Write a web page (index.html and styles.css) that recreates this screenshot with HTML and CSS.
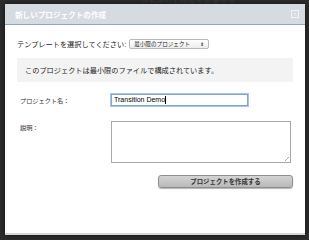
FILE: index.html
```html
<!DOCTYPE html>
<html lang="ja">
<head>
    <meta charset="UTF-8">
    <title>新しいプロジェクトの作成</title>
    <link rel="stylesheet" href="styles.css">
</head>
<body>
    <div class="backdrop-text">アカウント情報を編集する</div>
    <div class="dialog">
        <div class="dialog-header">
            <h1>新しいプロジェクトの作成</h1>
            <span class="close-btn">×</span>
        </div>
        <div class="dialog-body">
            <div class="template-row">
                <label>テンプレートを選択してください:</label>
                <span class="select">最小限のプロジェクト <span class="arrows">⬍</span></span>
            </div>
            <div class="info-box">このプロジェクトは最小限のファイルで構成されています。</div>
            <div class="form-row">
                <label>プロジェクト名：</label>
                <div class="input focused">Transition Demo<span class="caret"></span></div>
            </div>
            <div class="form-row">
                <label>説明：</label>
                <div class="textarea"></div>
            </div>
            <div class="actions">
                <button class="create-btn">プロジェクトを作成する</button>
            </div>
        </div>
    </div>
</body>
</html>
```

FILE: styles.css
```css
* {
    margin: 0;
    padding: 0;
    box-sizing: border-box;
}

body {
    font-family: "Liberation Sans", "Noto Sans CJK JP", sans-serif;
    background: #2d2d2d;
    width: 309px;
    height: 240px;
    overflow: hidden;
    position: relative;
    padding: 4px 4px 0 5px;
}

.backdrop-text {
    position: absolute;
    top: -3px;
    left: 140px;
    color: #3c3c3c;
    font-size: 8px;
}

.dialog {
    position: relative;
    width: 300px;
    height: 231px;
    background: #fff;
    border-bottom: 2px solid #d4d6da;
    box-shadow: 0 0 6px rgba(0, 0, 0, 0.6);
}

.dialog-header {
    height: 21px;
    background: #d6dae1;
    border-bottom: 1px solid #8ba5c9;
    display: flex;
    align-items: center;
    justify-content: space-between;
    padding: 0 6px 0 10px;
}

.dialog-header h1 {
    color: #fff;
    font-size: 7.6px;
    font-weight: bold;
}

.close-btn {
    width: 8px;
    height: 8px;
    border: 1px solid #f2f3f6;
    color: #f2f3f6;
    font-size: 6px;
    line-height: 6px;
    text-align: center;
}

.dialog-body {
    padding: 13px 12px 0 12px;
    color: #222;
    font-size: 7.2px;
}

.template-row {
    display: flex;
    align-items: center;
    gap: 3px;
    height: 12px;
}

.select {
    display: inline-flex;
    align-items: center;
    justify-content: space-between;
    width: 80px;
    height: 10px;
    padding: 0 4px;
    border: 1px solid #b9b9b9;
    border-radius: 2px;
    background: linear-gradient(#ffffff, #ececec);
    font-size: 5.6px;
}

.arrows {
    font-size: 5px;
    color: #555;
}

.info-box {
    margin-top: 8px;
    height: 24px;
    background: #f3f3f3;
    padding-left: 8px;
    display: flex;
    align-items: center;
}

.form-row {
    display: flex;
    margin-top: 12px;
}

.form-row + .form-row {
    margin-top: 15px;
}

.form-row label {
    width: 94px;
    padding-left: 3px;
    padding-top: 2px;
    font-size: 6.2px;
    color: #333;
}

.input {
    width: 137px;
    height: 12px;
    border: 1px solid #7ea6d6;
    box-shadow: 0 0 0 1px #a7c4e8;
    padding: 0 2px;
    font-size: 7px;
    line-height: 10px;
    color: #000;
    display: flex;
    align-items: center;
}

.caret {
    width: 1px;
    height: 8px;
    background: #000;
}

.textarea {
    width: 180px;
    height: 42px;
    border: 1px solid #a9a9a9;
    position: relative;
}

.textarea::after {
    content: "";
    position: absolute;
    right: 1px;
    bottom: 1px;
    width: 4px;
    height: 4px;
    background: linear-gradient(135deg, transparent 45%, #aaa 45%, #aaa 55%, transparent 55%);
}

.actions {
    display: flex;
    justify-content: flex-end;
    margin-top: 12px;
}

.create-btn {
    width: 135px;
    height: 13px;
    border: 1px solid #8f8f8f;
    border-radius: 3px;
    background: linear-gradient(#d4d4d4, #b8b8b8);
    box-shadow: 0 1px 1px rgba(0, 0, 0, 0.3);
    font-family: inherit;
    font-size: 6.4px;
    font-weight: bold;
    color: #333;
}
```
